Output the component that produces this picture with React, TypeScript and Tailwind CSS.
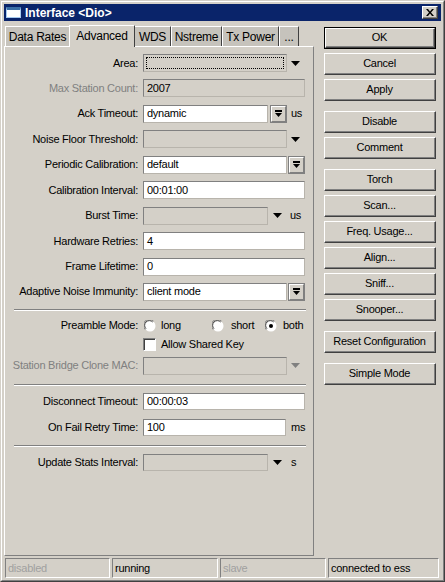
import React from 'react';

const face = "font-['Liberation_Sans',Arial,sans-serif]";

const DownArrow: React.FC<{ gray?: boolean }> = ({ gray }) => (
  <svg width="9" height="5" viewBox="0 0 9 5" className="block">
    <path d="M0 0h9L4.5 5z" fill={gray ? '#808080' : '#000'} />
  </svg>
);

const BarArrow: React.FC = () => (
  <svg width="7" height="8" viewBox="0 0 7 8" className="block">
    <rect x="0" y="0" width="7" height="2" fill="#000" />
    <path d="M0 3h7L3.5 7z" fill="#000" />
  </svg>
);

// sunken text box
const Field: React.FC<{
  w: number;
  value?: string;
  white?: boolean;
  focus?: boolean;
  h?: number;
}> = ({ w, value, white, focus, h = 18 }) => (
  <div
    className={`relative flex items-center border border-t-[#808080] border-l-[#808080] border-r-[#b8b4ac] border-b-[#b8b4ac] ${
      white ? 'bg-white' : 'bg-[#d4d0c8]'
    }`}
    style={{ width: w, height: h }}
  >
    {focus && <div className="absolute inset-[2px] border border-dotted border-black" />}
    {value && <span className="pl-[3px] text-black">{value}</span>}
  </div>
);

const DropBtn: React.FC = () => (
  <div className="w-[17px] h-[18px] border border-[#808080] flex">
    <div className="flex-1 flex items-center justify-center bg-[#d4d0c8] border-t border-l border-white border-r border-b border-r-[#808080] border-b-[#808080]">
      <BarArrow />
    </div>
  </div>
);

const ArrowSlot: React.FC<{ gray?: boolean }> = ({ gray }) => (
  <div className="w-[17px] h-[18px] flex items-center justify-center">
    <DownArrow gray={gray} />
  </div>
);

const Row: React.FC<{ label: string; dim?: boolean; children: React.ReactNode }> = ({
  label,
  dim,
  children,
}) => (
  <div className="flex items-center h-[18px]">
    <div className={`w-[133px] text-right whitespace-nowrap ${dim ? 'text-[#808080]' : 'text-black'}`}>
      {label}
    </div>
    <div className="ml-[5px] flex items-center">{children}</div>
  </div>
);

const Sep: React.FC = () => (
  <div className="ml-[9px] w-[292px] h-[2px] border-t border-[#808080] border-b border-b-white" />
);

const Radio: React.FC<{ on?: boolean }> = ({ on }) => (
  <svg width="12" height="12" viewBox="0 0 12 12" className="block shrink-0">
    <circle cx="6" cy="6" r="5.5" fill="#fff" />
    <path d="M1.1 9.5A5.5 5.5 0 0 1 9.5 1.1" fill="none" stroke="#808080" strokeWidth="1" />
    <path d="M2 8.7A4.5 4.5 0 0 1 8.7 2" fill="none" stroke="#404040" strokeWidth="1" />
    {on && <circle cx="6" cy="6" r="2" fill="#000" />}
  </svg>
);

const Btn: React.FC<{ label: string; def?: boolean }> = ({ label, def }) => (
  <div className={`h-[22px] w-[112px] ${def ? 'border border-black' : ''}`}>
    <div className="h-full flex border-t border-l border-white border-r border-b border-r-[#404040] border-b-[#404040]">
      <div className="flex-1 flex items-center justify-center bg-[#d4d0c8] border-r border-b border-[#808080] text-black">
        {label}
      </div>
    </div>
  </div>
);

const StatusCell: React.FC<{ w: number; text: string; dim?: boolean }> = ({ w, text, dim }) => (
  <div
    className={`h-[20px] flex items-center pl-[2px] border border-t-[#808080] border-l-[#808080] border-r-white border-b-white ${
      dim ? 'text-[#a0a0a0]' : 'text-black'
    }`}
    style={{ width: w }}
  >
    {text}
  </div>
);

const tabs = [
  { t: 'Data Rates', w: 65 },
  { t: 'Advanced', w: 64, active: true },
  { t: 'WDS', w: 37 },
  { t: 'Nstreme', w: 51 },
  { t: 'Tx Power', w: 57 },
  { t: '...', w: 20 },
];

export default function App() {
  return (
    <div className={`${face} text-[11px] tracking-[-0.25px] leading-none w-[445px] h-[582px] bg-[#d4d0c8] border border-t-[#d4d0c8] border-l-[#d4d0c8] border-r-[#404040] border-b-[#404040]`}>
      <div className="h-full flex flex-col border border-t-white border-l-white border-r-[#808080] border-b-[#808080] px-[2px] pt-[2px] pb-[2px]">
        {/* title bar */}
        <div className="h-[17px] bg-[#0a246a] flex items-center pl-[2px] pr-[3px]">
          <div className="w-[15px] h-[11px] bg-white border border-[#a6caf0] border-t-[3px] border-t-[#3a6ea5]" />
          <span className="ml-[4px] text-white font-bold text-[12px] tracking-normal">Interface &lt;Dio&gt;</span>
          <div className="ml-auto w-[16px] h-[13px] flex border-t border-l border-white border-r border-b border-r-[#404040] border-b-[#404040]">
            <div className="flex-1 flex items-center justify-center bg-[#d4d0c8] border-r border-b border-[#808080]">
              <svg width="8" height="7" viewBox="0 0 8 7">
                <path d="M0 0h2l2 2.5L6 0h2L5 3.5 8 7H6L4 4.5 2 7H0l3-3.5z" fill="#000" />
              </svg>
            </div>
          </div>
        </div>

        <div className="flex flex-1 mt-[3px]">
          {/* left: tabs + panel */}
          <div className="w-[310px] flex flex-col">
            <div className="h-[22px] flex items-end pl-[1px]">
              {tabs.map((tab) =>
                tab.active ? (
                  <div
                    key={tab.t}
                    className="relative z-10 h-[22px] -mb-[1px] -mx-[1px] bg-[#d4d0c8] border-t border-l border-white border-r border-r-[#404040] flex items-start pt-[4px] justify-center text-[12px]"
                    style={{ width: tab.w + 2 }}
                  >
                    {tab.t}
                  </div>
                ) : (
                  <div
                    key={tab.t}
                    className="h-[20px] bg-[#c6c3bc] border-t border-l border-white border-r border-r-[#404040] flex items-center justify-center text-[12px]"
                    style={{ width: tab.w }}
                  >
                    {tab.t}
                  </div>
                ),
              )}
            </div>
            <div className="flex-1 border-t border-l border-white border-r border-b border-r-[#808080] border-b-[#808080] pt-[7px]">
              <div className="flex flex-col gap-[7.45px]">
                <Row label="Area:">
                  <Field w={144} focus />
                  <ArrowSlot />
                </Row>
                <Row label="Max Station Count:" dim>
                  <Field w={162} value="2007" />
                </Row>
                <Row label="Ack Timeout:">
                  <Field w={125} value="dynamic" white />
                  <div className="ml-[2px]">
                    <DropBtn />
                  </div>
                  <span className="ml-[4px]">us</span>
                </Row>
                <Row label="Noise Floor Threshold:">
                  <Field w={144} />
                  <ArrowSlot />
                </Row>
                <Row label="Periodic Calibration:">
                  <Field w={144} value="default" white />
                  <div className="ml-[1px]">
                    <DropBtn />
                  </div>
                </Row>
                <Row label="Calibration Interval:">
                  <Field w={162} value="00:01:00" white />
                </Row>
                <Row label="Burst Time:">
                  <Field w={125} />
                  <div className="ml-[1px]">
                    <ArrowSlot />
                  </div>
                  <span className="ml-[4px]">us</span>
                </Row>
                <Row label="Hardware Retries:">
                  <Field w={162} value="4" white />
                </Row>
                <Row label="Frame Lifetime:">
                  <Field w={162} value="0" white />
                </Row>
                <Row label="Adaptive Noise Immunity:">
                  <Field w={144} value="client mode" white />
                  <div className="ml-[1px]">
                    <DropBtn />
                  </div>
                </Row>
              </div>

              <div className="mt-[8px]">
                <Sep />
              </div>

              <div className="mt-[7px] flex items-center h-[16px]">
                <div className="w-[133px] text-right">Preamble Mode:</div>
                <div className="ml-[6px] w-[68px] flex items-center">
                  <Radio />
                  <span className="ml-[5px]">long</span>
                </div>
                <div className="w-[53px] flex items-center">
                  <Radio />
                  <span className="ml-[7px]">short</span>
                </div>
                <div className="flex items-center">
                  <Radio on />
                  <span className="ml-[6px]">both</span>
                </div>
              </div>

              <div className="mt-[4px] flex items-center h-[13px] pl-[138px]">
                <div className="w-[13px] h-[13px] bg-white border border-t-[#808080] border-l-[#808080] border-r-white border-b-white shadow-[inset_1px_1px_0_#404040]" />
                <span className="ml-[5px]">Allow Shared Key</span>
              </div>

              <div className="mt-[6px]">
                <Row label="Station Bridge Clone MAC:" dim>
                  <Field w={144} />
                  <ArrowSlot gray />
                </Row>
              </div>

              <div className="mt-[9px]">
                <Sep />
              </div>

              <div className="mt-[7px] flex flex-col gap-[8px]">
                <Row label="Disconnect Timeout:">
                  <Field w={162} h={17} value="00:00:03" white />
                </Row>
                <Row label="On Fail Retry Time:">
                  <Field w={143} h={17} value="100" white />
                  <span className="ml-[5px]">ms</span>
                </Row>
              </div>

              <div className="mt-[8px]">
                <Sep />
              </div>

              <div className="mt-[7px]">
                <Row label="Update Stats Interval:">
                  <Field w={125} h={17} />
                  <div className="ml-[1px]">
                    <ArrowSlot />
                  </div>
                  <span className="ml-[5px]">s</span>
                </Row>
              </div>
            </div>
          </div>

          {/* right: buttons */}
          <div className="ml-[10px] pt-[3px] flex flex-col">
            <div className="flex flex-col gap-[4px]">
              <Btn label="OK" def />
              <Btn label="Cancel" />
              <Btn label="Apply" />
            </div>
            <div className="mt-[10px] flex flex-col gap-[4px]">
              <Btn label="Disable" />
              <Btn label="Comment" />
            </div>
            <div className="mt-[10px] flex flex-col gap-[4px]">
              <Btn label="Torch" />
              <Btn label="Scan..." />
              <Btn label="Freq. Usage..." />
              <Btn label="Align..." />
              <Btn label="Sniff..." />
              <Btn label="Snooper..." />
            </div>
            <div className="mt-[10px]">
              <Btn label="Reset Configuration" />
            </div>
            <div className="mt-[10px]">
              <Btn label="Simple Mode" />
            </div>
          </div>
        </div>

        {/* status bar */}
        <div className="mt-[2px] flex gap-[2px] pl-[1px]">
          <StatusCell w={105} text="disabled" dim />
          <StatusCell w={106} text="running" />
          <StatusCell w={106} text="slave" dim />
          <StatusCell w={111} text="connected to ess" />
        </div>
      </div>
    </div>
  );
}
